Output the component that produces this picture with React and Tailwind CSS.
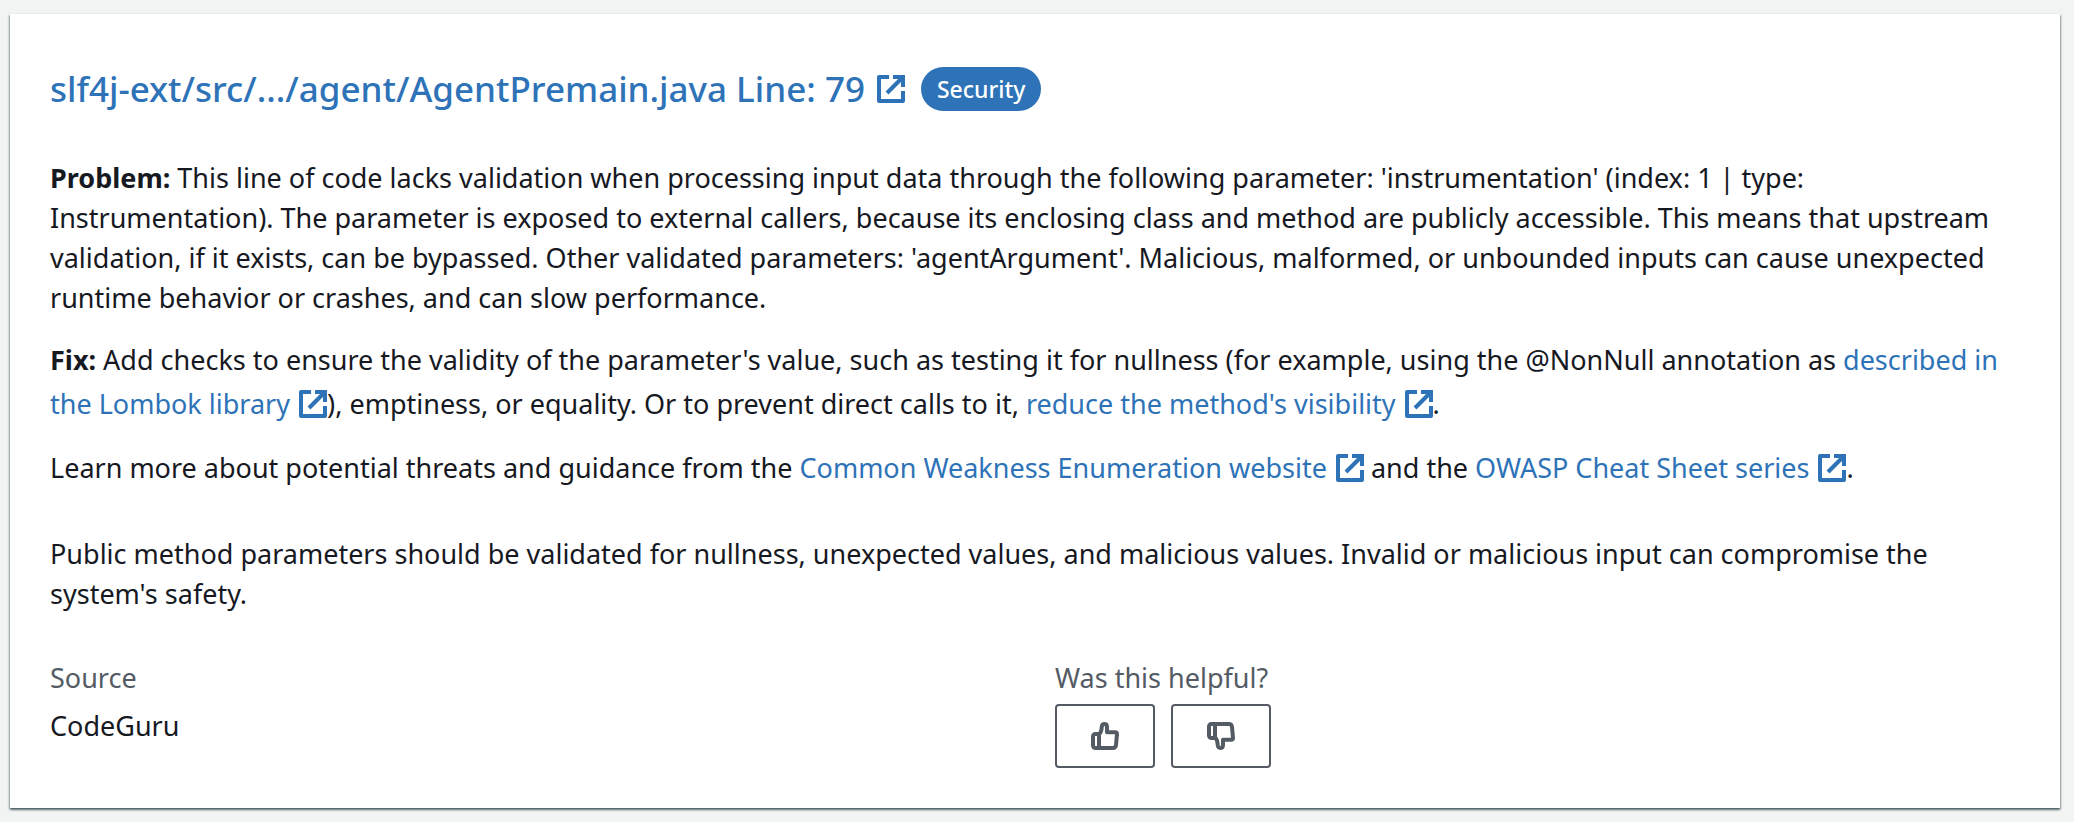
function ExternalIcon({ className }) {
	return (
		<svg viewBox="0 0 14 14" fill="none" stroke="currentColor" strokeWidth="2" aria-hidden="true" className={className}>
			<path d="M6 1H1v12h12V8" strokeLinejoin="round" />
			<path d="M8 1h5v5" />
			<path d="M13 1L5 9" />
		</svg>
	);
}

function ThumbIcon({ down }) {
	return (
		<svg
			viewBox="0 0 14 14"
			fill="none"
			stroke="currentColor"
			strokeWidth="2"
			strokeLinejoin="round"
			aria-hidden="true"
			className={down ? 'size-7 -scale-y-100' : 'size-7'}
		>
			<path d="M4 13H2.200A1.200 1.200 0 0 1 1 11.800V7.200A1.200 1.200 0 0 1 2.200 6H4z" />
			<path d="M4 13V6.200C5 5.300 5.300 4 5.400 2.300C5.500 1.400 6 1 6.700 1C7.500 1 8 1.600 8 2.500V5.100H12C12.700 5.100 13 5.500 13 6L12.500 11.500C12.400 12.500 11.900 13 11 13z" />
		</svg>
	);
}

function DocLink({ href, children }) {
	return (
		<a href={href} className="text-[#2e73b8] hover:underline">
			{children} <ExternalIcon className="ml-0.5 inline-block size-7 align-[-4px]" />
		</a>
	);
}

function Vote({ label, down }) {
	return (
		<button
			type="button"
			aria-label={label}
			className="flex h-16 w-25 items-center justify-center rounded-sm border-2 border-[#545b64] bg-white hover:bg-gray-50"
		>
			<ThumbIcon down={down} />
		</button>
	);
}

export default function App() {
	return (
		<main className="min-h-screen bg-[#f2f3f3] pt-3.5 pr-3.5 pb-3.5 pl-2.5 font-['Noto_Sans',sans-serif] text-[27px] leading-10 text-[#16191f]">
			<article className="bg-white px-10 pt-12 pb-10 shadow-[0_2px_2px_0_rgba(0,28,36,0.5),1px_1px_2px_0_rgba(0,28,36,0.25),-1px_1px_2px_0_rgba(0,28,36,0.25)]">
				<header className="flex items-center gap-4">
					<h2 className="text-[35px] leading-[54px] font-medium">
						<a href="#finding" className="flex items-center gap-3 text-[#2e73b8] hover:underline">
							slf4j-ext/src/.../agent/AgentPremain.java Line: 79
							<ExternalIcon className="size-7" />
						</a>
					</h2>
					<span className="rounded-full bg-[#2e73b8] px-4 text-[23px] leading-11 font-medium text-white">Security</span>
				</header>

				<p className="mt-[42px]">
					<strong>Problem:</strong> This line of code lacks validation when processing input data through the following
					parameter: 'instrumentation' (index: 1 | type: Instrumentation). The parameter is exposed to external callers,
					because its enclosing class and method are publicly accessible. This means that upstream validation, if it
					exists, can be bypassed. Other validated parameters: 'agentArgument'. Malicious, malformed, or unbounded inputs
					can cause unexpected runtime behavior or crashes, and can slow performance.
				</p>
				<p className="mt-5 leading-11">
					<strong>Fix:</strong> Add checks to ensure the validity of the parameter's value, such as testing it for
					nullness (for example, using the @NonNull annotation as{' '}
					<DocLink href="#lombok">described in the Lombok library</DocLink>), emptiness, or equality. Or to prevent
					direct calls to it, <DocLink href="#visibility">reduce the method's visibility</DocLink>.
				</p>
				<p className="mt-5 leading-11">
					Learn more about potential threats and guidance from the{' '}
					<DocLink href="#cwe">Common Weakness Enumeration website</DocLink> and the{' '}
					<DocLink href="#owasp">OWASP Cheat Sheet series</DocLink>.
				</p>
				<p className="mt-11">
					Public method parameters should be validated for nullness, unexpected values, and malicious values. Invalid or
					malicious input can compromise the system's safety.
				</p>

				<div className="mt-11 grid grid-cols-2 gap-10">
					<dl>
						<dt className="text-[#545b64]">Source</dt>
						<dd className="mt-2">CodeGuru</dd>
					</dl>
					<div className="text-[#545b64]">
						<p>Was this helpful?</p>
						<div className="mt-1.5 flex gap-4">
							<Vote label="Helpful" />
							<Vote label="Not helpful" down />
						</div>
					</div>
				</div>
			</article>
		</main>
	);
}
